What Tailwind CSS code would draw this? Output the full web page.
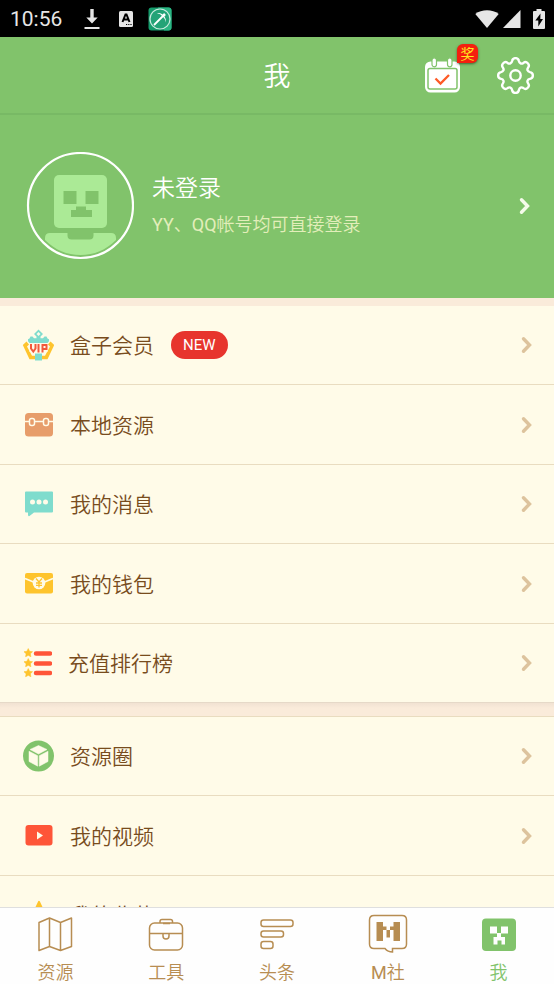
<!DOCTYPE html>
<html lang="zh-CN">
<head>
<meta charset="utf-8">
<meta name="viewport" content="width=device-width, initial-scale=1">
<title>我</title>
<script src="https://cdn.jsdelivr.net/npm/@tailwindcss/browser@4"></script>
</head>
<body class="flex h-screen flex-col overflow-hidden bg-[#fffbe8] font-[Roboto,'Noto_Sans_CJK_SC',sans-serif] font-[350] text-[#784c1d]">

<!-- Shared symbols -->
<svg class="hidden" aria-hidden="true">
  <symbol id="chevron" viewBox="0 0 12 18"><path d="M2.500 2.800 8.500 9l-6 6.200" fill="none" stroke="currentColor" stroke-width="3.400" stroke-linecap="round" stroke-linejoin="miter"/></symbol>
  <symbol id="star" viewBox="0 0 24 24"><path d="m12 1.500 3.300 6.900 7.500 1-5.500 5.200 1.400 7.500-6.700-3.700-6.700 3.700 1.400-7.500L1.200 9.400l7.500-1z" fill="#fec42d" stroke="#fec42d" stroke-width="1.500" stroke-linejoin="round"/></symbol>
</svg>

<!-- Status bar -->
<div class="flex h-[37px] shrink-0 items-center bg-black pr-[9px] pl-[10px] text-[#e6e6e6]">
  <span class="text-[21px] leading-6 font-normal">10:56</span>
  <svg class="ml-5 h-[22px] w-5" viewBox="0 0 18 22" fill="currentColor"><path d="M7.300 1h3.400v8.500h4L9 15.500 3.300 9.500h4zM1.500 19h15v2h-15z"/></svg>
  <svg class="ml-4 size-4" viewBox="0 0 16 16"><rect x="1" width="14" height="16" rx="1.500" fill="#e6e6e6"/><path d="M4.500 11 7.500 3.500h1L11.500 11M5.800 8.500h4.400" fill="none" stroke="#000" stroke-width="2"/><path d="M8 13.500h1.200m1 0h1.200m1 0h1.200" stroke="#000" stroke-width="1.200"/></svg>
  <svg class="ml-[14px] size-6" viewBox="0 0 24 24"><rect x=".5" y=".5" width="23" height="23" rx="3" fill="#159c6c"/><path d="M10 .5h10.500a3 3 0 0 1 3 3v17a3 3 0 0 1-3 3H16z" fill="#2bb583"/><circle cx="12" cy="12" r="10" fill="#23a377" stroke="#c9eadf" stroke-width="1.200"/><path d="M6 18 15.500 8.500" stroke="#fff" stroke-width="1.800"/><path d="M9 6.300c4.500-1.300 9.500 3.500 9 9.200-.8-3.300-2-5-3.500-6.300C13 7.700 11.500 6.800 9 6.300z" fill="#fff"/><path d="m14.500 9.500 2.500-2.500" stroke="#fff" stroke-width="2.500"/></svg>
  <svg class="ml-auto h-[18px] w-6" viewBox="0 0 24 18"><path d="M12 18 .3 4C6.500-1 17.500-1 23.700 4z" fill="currentColor"/></svg>
  <svg class="ml-1 size-[18px]" viewBox="0 0 18 18"><path d="M17.500 0v18H0z" fill="currentColor"/></svg>
  <svg class="ml-3 h-5 w-3" viewBox="0 0 12 20"><path d="M3.500 0h5v2H11q1 0 1 1v16q0 1-1 1H1q-1 0-1-1V3q0-1 1-1h2.500z" fill="currentColor"/><path d="M7.500 4.500 2.300 11.500h3v6l4.700-7.500H7.300z" fill="#000"/></svg>
</div>

<!-- Title bar -->
<header class="grid h-[78px] shrink-0 grid-cols-[1fr_auto_1fr] items-center border-b-2 border-[#78b965] bg-[#81c36b] text-white">
  <h1 class="col-start-2 pt-1 text-[27px] leading-9">我</h1>
  <div class="flex items-center justify-end gap-9 pr-5">
    <button type="button" aria-label="签到" class="relative">
      <svg class="h-9 w-[37px]" viewBox="0 0 37 36"><rect x="2" y="5.500" width="33" height="29" rx="4.500" fill="#fff" stroke="#fff" stroke-width="2"/><rect x="4" y="11.500" width="29" height="20.500" rx="2" fill="none" stroke="#81c36b" stroke-width="1.500"/><rect x="8" y=".8" width="4.500" height="9" rx="2.200" fill="#fff" stroke="#81c36b" stroke-width="1.200"/><rect x="23.500" y=".8" width="4.500" height="9" rx="2.200" fill="#fff" stroke="#81c36b" stroke-width="1.200"/><path d="m11.500 21.500 5 5 8.500-8.500" fill="none" stroke="#fe5a26" stroke-width="2.300"/></svg>
      <span class="absolute -top-[13px] left-[33px] flex h-[19px] w-[21px] items-center justify-center rounded-md rounded-bl-none bg-[#f4200f] text-[14px] leading-none font-normal text-[#ffe81f] shadow-sm shadow-black/40">奖</span>
    </button>
    <button type="button" aria-label="设置">
      <svg class="size-[37px]" viewBox="-18.500 -18.500 37 37" fill="none" stroke="#fff" stroke-width="2.400" stroke-linejoin="round"><circle r="5.200"/><path d="M-3.400-14.500C-2.800-18.300 2.800-18.300 3.400-14.500C3.900-12 5.900-11.200 7.900-12.600C11-14.900 14.900-11 12.600-7.900C11.200-5.900 12-3.900 14.500-3.400C18.300-2.800 18.300 2.800 14.500 3.400C12 3.900 11.200 5.900 12.600 7.900C14.900 11 11 14.900 7.900 12.600C5.900 11.200 3.900 12 3.400 14.500C2.800 18.300-2.800 18.300-3.400 14.500C-3.900 12-5.900 11.200-7.900 12.600C-11 14.900-14.900 11-12.600 7.900C-11.200 5.900-12 3.900-14.500 3.400C-18.300 2.800-18.300-2.800-14.500-3.400C-12-3.900-11.200-5.900-12.600-7.900C-14.900-11-11-14.900-7.900-12.600C-5.900-11.200-3.900-12-3.400-14.500Z"/></svg>
    </button>
  </div>
</header>

<main class="min-h-0 flex-1 overflow-y-auto [scrollbar-width:none]">
  <!-- Profile -->
  <a href="#login" class="flex h-[183px] items-center bg-[#81c36b] pr-[23px] pb-[2px] pl-[26px] text-white">
    <svg class="size-[108px]" viewBox="0 0 108 108">
      <circle cx="54.500" cy="53.500" r="52.500" fill="none" stroke="#fff" stroke-width="2.200"/>
      <rect x="28" y="23" width="53" height="53" rx="5" fill="#abea96"/>
      <path d="M37.500 39h13v13h-13zM59.500 39h13v13h-13zM50 54.500h10v3.500h6V65H45v-7h5z" fill="#81c36b"/>
      <path d="M24 81h17.500V83.500q0 4 4 4h18q4 0 4-4V81H85q5 0 5 5v2C80 98 68 103 54.500 103S29 98 19 88v-2q0-5 5-5z" fill="#abea96"/>
    </svg>
    <span class="ml-[18px] flex flex-col gap-[2px]">
      <span class="text-[23px] leading-9">未登录</span>
      <span class="text-[18px] leading-8 text-[#e3eeba]"><span class="font-normal">YY</span>、<span class="font-normal">QQ</span>帐号均可直接登录</span>
    </span>
    <svg class="ml-auto h-[18px] w-3 text-[#f5fbea]"><use href="#chevron"/></svg>
  </a>

  <div class="h-2 bg-[#faebda]"></div>

  <nav aria-label="账户" class="*:flex *:items-center *:border-b *:border-[#e9dcc0] *:pr-[21px] *:pl-[22px] *:text-[21px] *:odd:h-[79px] *:even:h-20 *:last:border-[#e6d9c8]">
    <a href="#vip">
      <svg class="size-8" viewBox="0 0 32 32"><path d="m16.500 .5 4.500 4.500-2.500 2.500v1.700h2.500L22.500 7.500h2l1 2 1.500.8v2L25.500 14h-18L6 12.300v-2l1.500-.8 1-2h2L12 9.200h2.500V7.500L12 5z" fill="#7fdccd"/><path d="m16.500 3 2 2-2 2-2-2z" fill="#fffbe8"/><path d="M4.500 12.500.8 16l6.700 14.300h5.500v-3.500H10L5 17.500l2-2zM28.500 12.500l3.700 3.500-6.700 14.300H20v-3.500h3l5-9.300-2-2z" fill="#fec42d"/><path d="M7.500 14h18v9h-4v2.500h-10V23h-4z" fill="#fffbe8"/><path d="M9 15v4.500l2.300 3 2.200-3V15M16.500 15v8.500M20.500 23.500V16h4v4h-4" fill="none" stroke="#f2593b" stroke-width="2"/><path d="M13 24.500h7v7h-7z" fill="#7fdccd"/></svg>
      <span class="ml-4 pt-1">盒子会员</span>
      <span class="ml-[17px] rounded-full bg-[#e7342d] px-3 text-[15px] leading-7 font-normal text-white">NEW</span>
      <svg class="ml-auto h-[18px] w-3 text-[#ddc39d]"><use href="#chevron"/></svg>
    </a>
    <a href="#local">
      <svg class="size-8" viewBox="0 0 32 32"><rect x="3" y="4" width="28" height="23.500" rx="3.500" fill="#e79d6a"/><path d="M3 12.500h4.500m5 0h9m5 0H31" stroke="#fffbe8" stroke-width="1.500"/><g fill="none" stroke="#fffbe8" stroke-width="1.500"><rect x="7.500" y="9.500" width="5" height="7" rx="2"/><rect x="21.500" y="9.500" width="5" height="7" rx="2"/></g></svg>
      <span class="ml-4 pt-1">本地资源</span>
      <svg class="ml-auto h-[18px] w-3 text-[#ddc39d]"><use href="#chevron"/></svg>
    </a>
    <a href="#messages">
      <svg class="size-8" viewBox="0 0 32 32"><path d="M4 3.500h26q1 0 1 1V23.500q0 1-1 1H12L7.500 28q-1.500.5-1.500-1v-2.500H4q-1 0-1-1V4.500q0-1 1-1z" fill="#7fdccd"/><g fill="#fffbe8"><circle cx="10.500" cy="14" r="2.500"/><circle cx="17" cy="14" r="2.500"/><circle cx="23.500" cy="14" r="2.500"/></g></svg>
      <span class="ml-4 pt-1">我的消息</span>
      <svg class="ml-auto h-[18px] w-3 text-[#ddc39d]"><use href="#chevron"/></svg>
    </a>
    <a href="#wallet">
      <svg class="size-8" viewBox="0 0 32 32"><rect x="3" y="5" width="28" height="20.500" rx="2" fill="#fec42d"/><path d="M3 10.500 11.500 14M31 10.500 22.500 14" stroke="#fffbe8" stroke-width="1.700"/><circle cx="17" cy="15" r="6.300" fill="#fffbe8"/><path d="m14 10.500 3 3.500 3-3.500M17 14v5.500m-3-4.500h6m-6 2.300h6" fill="none" stroke="#fec42d" stroke-width="1.300"/></svg>
      <span class="ml-4 pt-1">我的钱包</span>
      <svg class="ml-auto h-[18px] w-3 text-[#ddc39d]"><use href="#chevron"/></svg>
    </a>
    <a href="#ranking">
      <svg class="h-8 w-[30px]" viewBox="0 0 30 32"><use href="#star" x="1.500" y="1" width="9.500" height="9.500"/><use href="#star" x="1.500" y="11" width="9.500" height="9.500"/><use href="#star" x="1.500" y="21" width="9.500" height="9.500"/><path d="M14 6.500h14M14 16.500h14M14 26h14" stroke="#ff5538" stroke-width="4.500" stroke-linecap="round"/></svg>
      <span class="ml-4 pt-1">充值排行榜</span>
      <svg class="ml-auto h-[18px] w-3 text-[#ddc39d]"><use href="#chevron"/></svg>
    </a>
  </nav>

  <div class="h-[14px] border-b border-[#e9dcc0] bg-linear-to-b from-[#f1e2d2] to-[#faebda] to-40%"></div>

  <nav aria-label="内容" class="*:flex *:items-center *:border-b *:border-[#e9dcc0] *:pr-[21px] *:pl-[22px] *:text-[21px] *:odd:h-[79px] *:even:h-20">
    <a href="#circle">
      <svg class="size-8" viewBox="0 0 32 32"><circle cx="16.500" cy="16" r="15.500" fill="#81c36b"/><path d="m16.500 5.500 8.500 4-8.500 4.500L8 9.500zM7 11.200l8.700 4.500v10.500L7 21.500zM26 11.200l-8.700 4.500v10.500l8.700-4.700z" fill="#fffbe8" stroke="#fffbe8" stroke-width=".5" stroke-linejoin="round"/></svg>
      <span class="ml-4 pt-1">资源圈</span>
      <svg class="ml-auto h-[18px] w-3 text-[#ddc39d]"><use href="#chevron"/></svg>
    </a>
    <a href="#videos">
      <svg class="size-8" viewBox="0 0 32 32"><rect x="3.500" y="5" width="27" height="20.500" rx="3" fill="#fe5538"/><path d="m15 11.500 6 4-6 4z" fill="#fffbe8"/></svg>
      <span class="ml-4 pt-1">我的视频</span>
      <svg class="ml-auto h-[18px] w-3 text-[#ddc39d]"><use href="#chevron"/></svg>
    </a>
    <a href="#favorites">
      <svg class="size-8"><use href="#star" x="3" y="1" width="28" height="28"/></svg>
      <span class="ml-4 pt-1">我的收藏</span>
      <svg class="ml-auto h-[18px] w-3 text-[#ddc39d]"><use href="#chevron"/></svg>
    </a>
  </nav>
</main>

<!-- Tab bar -->
<nav aria-label="主导航" class="grid h-[77px] shrink-0 grid-cols-5 border-t border-[#dfdfdf] bg-[#fefefe] text-[18px] leading-7 text-[#b78d52] *:flex *:flex-col *:items-center *:gap-[5px] *:pt-[6px]">
  <a href="#res">
    <svg class="size-10" viewBox="0 0 40 40" fill="none" stroke="currentColor" stroke-width="1.500" stroke-linejoin="round"><path d="M4 8.500 14.500 4 25.500 8.500 36.500 4v28.500l-11 4L14.500 32.500 4 36.500zM14.500 4v28.500M25.500 8.500v28"/></svg>
    <span>资源</span>
  </a>
  <a href="#tools">
    <svg class="size-10" viewBox="0 0 40 40" fill="none" stroke="currentColor" stroke-width="1.500"><rect x="3.500" y="9" width="33" height="27" rx="5"/><path d="M3.500 19.500h33M14 9V7.500q0-2 2-2h8.500q2 0 2 2V9M17 9.500h7M17 19.500v2.500q0 3 3 3t3-3v-2.500"/></svg>
    <span>工具</span>
  </a>
  <a href="#news">
    <svg class="size-10" viewBox="0 0 40 40" fill="none" stroke="currentColor" stroke-width="1.500"><rect x="4" y="6" width="32" height="6.500" rx="2.500"/><rect x="4" y="17" width="22.500" height="6" rx="2.500"/><rect x="4" y="27.500" width="12" height="7" rx="2.500"/></svg>
    <span>头条</span>
  </a>
  <a href="#club">
    <svg class="size-10" viewBox="0 0 40 40"><path d="M6 1.500h28q4.500 0 4.500 4.500v24q0 4.500-4.500 4.500h-9.500V38c-3.500 0-5.500-1-7.500-3.500H6Q1.500 34.500 1.500 30V6Q1.500 1.500 6 1.500z" fill="none" stroke="currentColor" stroke-width="1.500"/><path d="M8.500 8H15v4.500h3.500V16h3.500v-3.500h3.500V8H32v19h-6.500V16H22v7.500h-3.500V16H15v11H8.500z" fill="currentColor"/></svg>
    <span><span class="font-normal">M</span>社</span>
  </a>
  <a href="#me" aria-current="page" class="text-[#81c36b]">
    <svg class="size-10" viewBox="0 0 40 40"><rect x="3" y="4.500" width="34" height="32.500" rx="4" fill="currentColor"/><path d="M11 12.500h7V19h4v-6.500h7V19.500h-7V23h4v7.500h-3.500V26.500h-4v4H14.500V23H18v-3.500h-7z" fill="#fefefe"/></svg>
    <span>我</span>
  </a>
</nav>
</body>
</html>
